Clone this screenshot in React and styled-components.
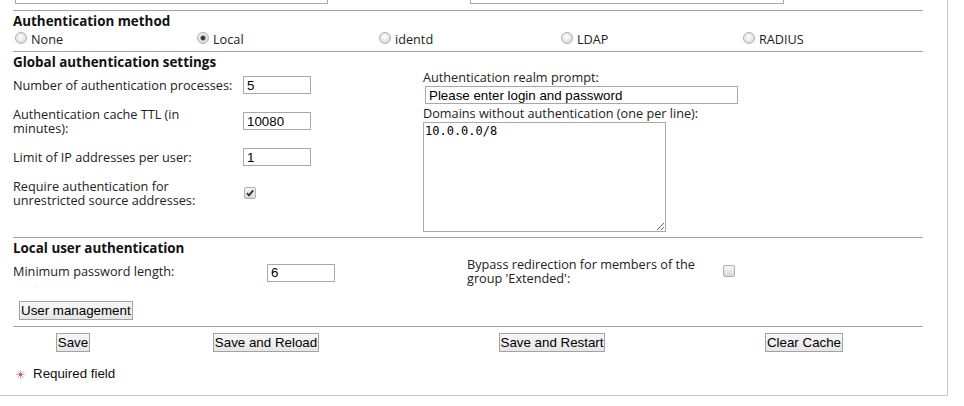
import styled, { createGlobalStyle } from "styled-components";

const GlobalStyle = createGlobalStyle`
  body {
    margin: 0;
    background: #fff;
    font-family: "Open Sans", "Liberation Sans", sans-serif;
    color: #222;
  }
`;

const App = () => {
  return (
    <>
      <GlobalStyle />
      <Panel>
        <TopInputs>
          <TextInput $w={313} />
          <TextInput $w={314} />
        </TopInputs>
        <Rule />
        <Heading>Authentication method</Heading>
        <RadioRow>
          {["None", "Local", "identd", "LDAP", "RADIUS"].map((m) => (
            <RadioLabel key={m}>
              <Radio type="radio" name="method" defaultChecked={m === "Local"} />
              {m}
            </RadioLabel>
          ))}
        </RadioRow>
        <Rule $mt={2} />
        <Heading>Global authentication settings</Heading>
        <Settings>
          <FieldGrid>
            <FieldLabel>
              <span>Number of authentication processes:</span>
            </FieldLabel>
            <FieldCell>
              <TextInput $w={68} defaultValue="5" />
            </FieldCell>
            <FieldLabel>
              <span>Authentication cache TTL (in minutes):</span>
            </FieldLabel>
            <FieldCell>
              <TextInput $w={68} defaultValue="10080" />
            </FieldCell>
            <FieldLabel>
              <span>Limit of IP addresses per user:</span>
            </FieldLabel>
            <FieldCell>
              <TextInput $w={68} defaultValue="1" />
            </FieldCell>
            <FieldLabel>
              <span>Require authentication for unrestricted source addresses:</span>
            </FieldLabel>
            <FieldCell>
              <CheckBox checked />
            </FieldCell>
          </FieldGrid>
          <Stack>
            <StackLabel>Authentication realm prompt:</StackLabel>
            <TextInput $w={313} $ml={2} defaultValue="Please enter login and password" />
            <StackLabel $mt={2}>Domains without authentication (one per line):</StackLabel>
            <Domains defaultValue="10.0.0.0/8" />
          </Stack>
        </Settings>
        <Rule />
        <Heading>Local user authentication</Heading>
        <LocalRow>
          <RowLabel>Minimum password length:</RowLabel>
          <div>
            <TextInput $w={68} defaultValue="6" />
          </div>
          <RowLabel>Bypass redirection for members of the group 'Extended':</RowLabel>
          <CheckBox />
        </LocalRow>
        <Button $ml={6} $mt={16}>User management</Button>
        <Rule />
        <ButtonRow>
          <Button>Save</Button>
          <Button>Save and Reload</Button>
          <Button>Save and Restart</Button>
          <Button>Clear Cache</Button>
        </ButtonRow>
        <Required>
          <svg width="9" height="9" viewBox="0 0 9 9">
            <g stroke="#eca3ab" strokeWidth="1" strokeLinecap="round">
              <line x1="4.5" y1="0.5" x2="4.5" y2="8.5" />
              <line x1="0.5" y1="4.5" x2="8.5" y2="4.5" />
              <line x1="1.7" y1="1.7" x2="7.3" y2="7.3" />
              <line x1="7.3" y1="1.7" x2="1.7" y2="7.3" />
            </g>
            <circle cx="4.5" cy="4.5" r="1.7" fill="#dc5a6a" />
          </svg>
          Required field
        </Required>
      </Panel>
    </>
  );
};

const CheckBox = ({ checked }) => (
  <Box>
    {checked && (
      <svg width="10" height="10" viewBox="0 0 10 10">
        <path d="M2 5.2 L4 7.4 L8.2 2.4" fill="none" stroke="#333" strokeWidth="1.8" />
      </svg>
    )}
  </Box>
);

const Panel = styled.div`
  width: 948px;
  height: 396px;
  box-sizing: border-box;
  padding-left: 13px;
  border-right: 1px solid #c6c6c6;
  border-bottom: 1px solid #c6c6c6;
  display: flex;
  flex-direction: column;
  align-items: flex-start;
`;

const TopInputs = styled.div`
  height: 4px;
  overflow: hidden;
  display: flex;
  align-items: flex-end;
  gap: 142px;
  padding-left: 2px;
`;

const TextInput = styled.input`
  width: ${(p) => p.$w}px;
  height: 18px;
  margin-left: ${(p) => p.$ml || 0}px;
  box-sizing: border-box;
  border: 1px solid #a9a9a9;
  padding: 0 3px;
  font: 13.33px "Liberation Sans", Arial, sans-serif;
  color: #000;
  background: #fff;
  outline: none;
`;

const Rule = styled.div`
  width: 910px;
  height: 1px;
  background: #a3a3a3;
  margin-top: ${(p) => (p.$mt === undefined ? 6 : p.$mt)}px;
  flex-shrink: 0;
`;

const Heading = styled.div`
  margin-top: 2px;
  font-size: 13.4px;
  font-weight: 700;
  line-height: 16px;
  color: #111;
`;

const RadioRow = styled.div`
  display: grid;
  grid-template-columns: repeat(5, 182px);
  height: 20px;
  align-items: start;
`;

const RadioLabel = styled.label`
  display: flex;
  align-items: flex-start;
  font-size: 12.7px;
  line-height: 15px;
  padding-top: 3px;
`;

const Radio = styled.input`
  appearance: none;
  flex-shrink: 0;
  width: 12px;
  height: 12px;
  margin: 0 4px 0 2px;
  border-radius: 50%;
  border: 1px solid #b0b0b0;
  box-sizing: border-box;
  background: radial-gradient(circle at 45% 40%, #ffffff, #dcdcdc 70%);
  &:checked {
    background: radial-gradient(circle, #3a3a3a 0 1.8px, #9a9a9a 2.4px, transparent 3.2px),
      radial-gradient(circle at 45% 40%, #ffffff, #dcdcdc 70%);
  }
`;

const Settings = styled.div`
  display: grid;
  grid-template-columns: 410px 1fr;
  margin-bottom: -1px;
`;

const FieldGrid = styled.div`
  display: grid;
  grid-template-columns: 230px 1fr;
  align-content: start;
`;

const FieldLabel = styled.div`
  padding: 6px 0 7px;
  font-size: 12.7px;
  line-height: 14px;
  display: flex;
  align-items: center;
  span {
    max-width: 222px;
  }
`;

const FieldCell = styled.div`
  padding: 6px 0 7px;
  display: flex;
  align-items: center;
`;

const Stack = styled.div`
  display: flex;
  flex-direction: column;
  align-items: flex-start;
`;

const StackLabel = styled.div`
  margin-top: ${(p) => p.$mt || 0}px;
  font-size: 12.7px;
  line-height: 15px;
  margin-bottom: 1px;
`;

const Domains = styled.textarea`
  width: 243px;
  height: 110px;
  box-sizing: border-box;
  border: 1px solid #a9a9a9;
  padding: 1px 1px;
  margin: 0;
  resize: both;
  font: 12px "DejaVu Sans Mono", "Liberation Mono", monospace;
  line-height: 14px;
  color: #000;
  outline: none;
`;

const LocalRow = styled.div`
  display: grid;
  grid-template-columns: 254px 200px 255px auto;
  align-items: center;
  padding-top: 1px;
`;

const RowLabel = styled.div`
  font-size: 12.7px;
  line-height: 14px;
  max-width: 245px;
`;

const Box = styled.span`
  width: 12px;
  height: 12px;
  box-sizing: border-box;
  border: 1px solid #b0b0b0;
  border-radius: 2px;
  background: linear-gradient(#f6f6f6, #d9d9d9);
  display: inline-flex;
  align-items: center;
  justify-content: center;
  margin-left: 1px;
`;

const Button = styled.button`
  margin-left: ${(p) => p.$ml || 0}px;
  margin-top: ${(p) => p.$mt || 0}px;
  height: 19px;
  padding: 0 1px;
  border: 1px solid #a3a3a3;
  border-radius: 0;
  background: linear-gradient(#f7f7f7, #e6e6e6);
  font: 13.33px "Liberation Sans", Arial, sans-serif;
  line-height: 15px;
  color: #000;
`;

const ButtonRow = styled.div`
  display: grid;
  grid-template-columns: 120px 266px 306px 198px;
  justify-items: center;
  margin-top: 6px;
`;

const Required = styled.div`
  display: flex;
  align-items: center;
  gap: 8px;
  margin: 14px 0 0 3px;
  font: 13.33px "Liberation Sans", Arial, sans-serif;
  line-height: 16px;
  color: #111;
`;

export default App;
